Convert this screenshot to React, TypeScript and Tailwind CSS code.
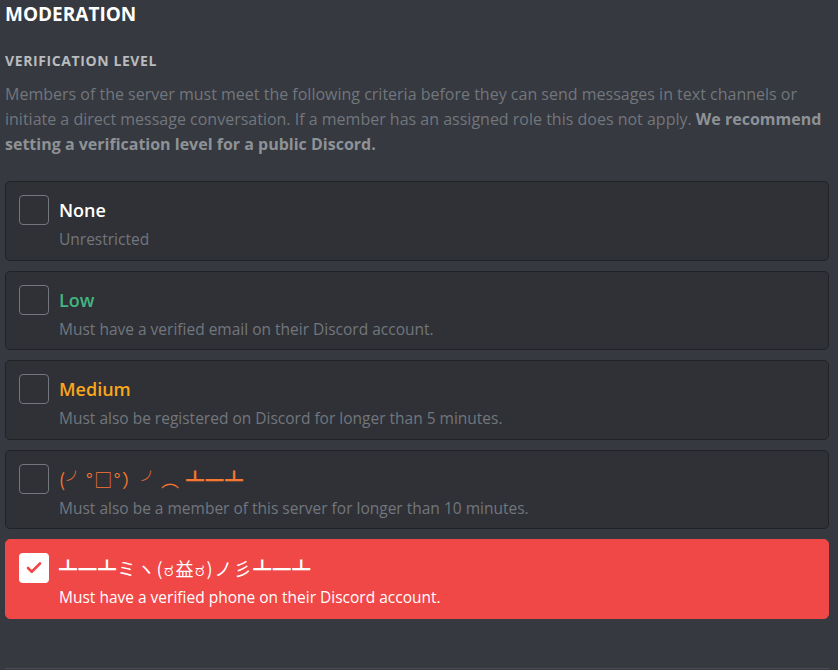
import { Check } from "lucide-react";

type Level = {
  id: string;
  title: string;
  description: string;
  color: string;
  kaomoji?: boolean;
};

const levels: Level[] = [
  { id: "none", title: "None", description: "Unrestricted", color: "text-white" },
  { id: "low", title: "Low", description: "Must have a verified email on their Discord account.", color: "text-[#43b581]" },
  { id: "medium", title: "Medium", description: "Must also be registered on Discord for longer than 5 minutes.", color: "text-[#faa61a]" },
  { id: "high", title: "(╯°□°）╯︵ ┻━┻", description: "Must also be a member of this server for longer than 10 minutes.", color: "text-[#f57731]", kaomoji: true },
  { id: "veryhigh", title: "┻━┻ミヽ(ಠ益ಠ)ノ彡┻━┻", description: "Must have a verified phone on their Discord account.", color: "text-white", kaomoji: true },
];

const selected = "veryhigh";

function LevelCard({ level }: { level: Level }) {
  const active = level.id === selected;
  return (
    <div
      className={
        active
          ? "flex h-[79.5px] gap-[10px] rounded-[5px] border border-[#f04747] bg-[#f04747] px-[13px] pt-[13px]"
          : "flex h-[79.5px] gap-[10px] rounded-[5px] border border-[#202225] bg-[#2f3136] px-[13px] pt-[13px]"
      }
    >
      <div
        className={
          active
            ? "flex h-[30px] w-[30px] shrink-0 items-center justify-center rounded-[4px] bg-white"
            : "h-[30px] w-[30px] shrink-0 rounded-[4px] border border-[#72767d]"
        }
      >
        {active && <Check className="h-[18px] w-[18px] text-[#f04747]" strokeWidth={3.5} />}
      </div>
      <div className="flex flex-col">
        <div
          className={`h-[30px] text-[18px] leading-[30px] ${level.kaomoji ? "font-normal tracking-[1.5px]" : "font-semibold"} ${active ? "text-white" : level.color}`}
          style={level.kaomoji ? { fontFamily: '"Noto Sans CJK JP", "Open Sans", sans-serif' } : undefined}
        >
          {level.title}
        </div>
        <div className={`text-[15.5px] leading-[28px] ${active ? "text-white" : "text-[#72767d]"}`}>
          {level.description}
        </div>
      </div>
    </div>
  );
}

export default function App() {
  return (
    <div
      className="h-[670px] w-[838px] overflow-hidden bg-[#36393f] pl-[5px] pr-[9px]"
      style={{ fontFamily: '"Open Sans", "Noto Sans CJK JP", sans-serif' }}
    >
      <h2 className="pt-[1px] text-[19px] font-bold leading-[26px] text-white">MODERATION</h2>
      <h3 className="mt-[25px] text-[14px] font-bold uppercase leading-[18px] tracking-[0.6px] text-[#b9bbbe]">
        Verification Level
      </h3>
      <p className="mt-[12px] text-[16px] leading-[25px] text-[#72767d]">
        Members of the server must meet the following criteria before they can send messages in text channels or
        initiate a direct message conversation. If a member has an assigned role this does not apply.{" "}
        <strong className="font-bold text-[#8e9297]">We recommend setting a verification level for a public Discord.</strong>
      </p>
      <div className="mt-[24px] flex flex-col gap-[10px]">
        {levels.map((level) => (
          <LevelCard key={level.id} level={level} />
        ))}
      </div>
      <div className="mt-[49px] border-t border-[#4a4d53]" />
    </div>
  );
}
